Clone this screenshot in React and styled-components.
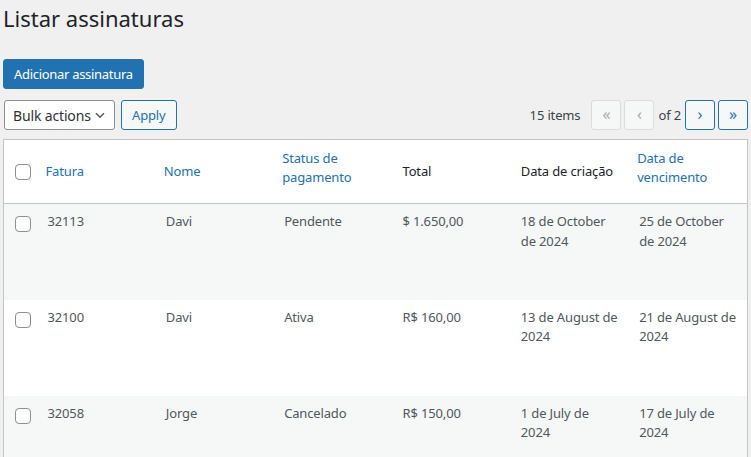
import React from "react";
import styled, { createGlobalStyle } from "styled-components";

const subscriptions = [
  {
    id: "32113",
    name: "Davi",
    status: "Pendente",
    total: "$ 1.650,00",
    created: "18 de October de 2024",
    due: "25 de October de 2024",
  },
  {
    id: "32100",
    name: "Davi",
    status: "Ativa",
    total: "R$ 160,00",
    created: "13 de August de 2024",
    due: "21 de August de 2024",
  },
  {
    id: "32058",
    name: "Jorge",
    status: "Cancelado",
    total: "R$ 150,00",
    created: "1 de July de 2024",
    due: "17 de July de 2024",
  },
];

// wraps: the label breaks onto two lines and sets the header height
const columns = [
  { key: "id", label: "Fatura", sortable: true },
  { key: "name", label: "Nome", sortable: true },
  { key: "status", label: "Status de pagamento", sortable: true, wraps: true },
  { key: "total", label: "Total" },
  { key: "created", label: "Data de criação" },
  { key: "due", label: "Data de vencimento", sortable: true, wraps: true },
];

const App = () => {
  return (
    <Page>
      <GlobalStyle />
      <Title>Listar assinaturas</Title>
      <PrimaryButton>Adicionar assinatura</PrimaryButton>

      <TableNav>
        <BulkGroup>
          <Select>
            Bulk actions
            <svg width="12" height="12" viewBox="0 0 12 12">
              <path
                d="M2 4.2l4 4 4-4"
                fill="none"
                stroke="#50575e"
                strokeWidth="1.4"
              />
            </svg>
          </Select>
          <SecondaryButton>Apply</SecondaryButton>
        </BulkGroup>
        <Pagination>
          <ItemCount>15 items</ItemCount>
          <PageButton disabled>«</PageButton>
          <PageButton disabled>‹</PageButton>
          <PageInfo>of 2</PageInfo>
          <PageButton>›</PageButton>
          <PageButton>»</PageButton>
        </Pagination>
      </TableNav>

      <Table>
        <colgroup>
          <col style={{ width: 34 }} />
          {columns.map((c) => (
            <col key={c.key} />
          ))}
        </colgroup>
        <thead>
          <tr>
            <HeadCheck>
              <Checkbox />
            </HeadCheck>
            {columns.map((c) =>
              c.sortable ? (
                <HeadCell key={c.key} $sortable>
                  <SortLink $wraps={c.wraps}>{c.label}</SortLink>
                </HeadCell>
              ) : (
                <HeadCell key={c.key}>{c.label}</HeadCell>
              )
            )}
          </tr>
        </thead>
        <tbody>
          {subscriptions.map((s, i) => (
            <Row key={s.id} $alt={i % 2 === 0}>
              <BodyCheck>
                <Checkbox />
              </BodyCheck>
              {columns.map((c) => (
                <Cell key={c.key}>{s[c.key]}</Cell>
              ))}
            </Row>
          ))}
        </tbody>
      </Table>
    </Page>
  );
};

export default App;

const GlobalStyle = createGlobalStyle`
  html, body {
    margin: 0;
    background: #f0f0f1;
  }
  body {
    font-family: "Noto Sans", "Open Sans", sans-serif;
    font-size: 13px;
    color: #3c434a;
    letter-spacing: -0.15px;
  }
`;

const Page = styled.div`
  padding: 0 3px 0 3px;
  display: flex;
  flex-direction: column;
  align-items: flex-start;
`;

const Title = styled.h1`
  margin: 0;
  padding-top: 3px;
  font-size: 22px;
  font-weight: 400;
  line-height: 30px;
  color: #1d2327;
  letter-spacing: 0;
`;

const PrimaryButton = styled.div`
  margin-top: 26px;
  height: 30px;
  box-sizing: border-box;
  padding: 0 10px;
  display: flex;
  align-items: center;
  background: #2271b1;
  border: 1px solid #2271b1;
  border-radius: 3px;
  color: #fff;
  font-size: 13px;
  letter-spacing: -0.3px;
`;

const TableNav = styled.div`
  margin-top: 11px;
  align-self: stretch;
  display: flex;
  justify-content: space-between;
  align-items: center;
  height: 30px;
`;

const BulkGroup = styled.div`
  display: flex;
  gap: 6px;
  padding-left: 1px;
`;

const Select = styled.div`
  box-sizing: border-box;
  width: 111px;
  height: 30px;
  padding: 0 8px 0 8px;
  display: flex;
  align-items: center;
  justify-content: space-between;
  background: #fff;
  border: 1px solid #8c8f94;
  border-radius: 3px;
  color: #2c3338;
  font-size: 14px;
`;

const SecondaryButton = styled.div`
  box-sizing: border-box;
  height: 30px;
  padding: 0 10px;
  display: flex;
  align-items: center;
  background: #f6f7f7;
  border: 1px solid #2271b1;
  border-radius: 3px;
  color: #2271b1;
`;

const Pagination = styled.div`
  display: flex;
  align-items: center;
  gap: 3px;
`;

const ItemCount = styled.span`
  margin-right: 8px;
  color: #3c434a;
`;

const PageInfo = styled.span`
  margin: 0 1px;
  color: #3c434a;
`;

const PageButton = styled.div`
  box-sizing: border-box;
  width: 30px;
  height: 30px;
  display: flex;
  align-items: center;
  justify-content: center;
  padding-bottom: 2px;
  font-size: 16px;
  border-radius: 3px;
  background: #f6f7f7;
  border: 1px solid ${(p) => (p.disabled ? "#dcdcde" : "#2271b1")};
  color: ${(p) => (p.disabled ? "#a7aaad" : "#2271b1")};
`;

const Table = styled.table`
  margin-top: 9px;
  width: 100%;
  table-layout: fixed;
  border-collapse: collapse;
  background: #fff;
  border: 1px solid #c3c4c7;
`;

const HeadCheck = styled.th`
  height: 63px;
  padding: 0 0 0 11px;
  vertical-align: middle;
  text-align: left;
  border-bottom: 1px solid #c3c4c7;
`;

const HeadCell = styled.th`
  padding: ${(p) => (p.$sortable ? "0" : "8px 10px")};
  vertical-align: middle;
  text-align: left;
  font-weight: 400;
  line-height: 19px;
  color: #1d2327;
  border-bottom: 1px solid #c3c4c7;
`;

const SortLink = styled.a`
  display: block;
  padding: ${(p) => (p.$wraps ? "8px 8px 16px" : "8px")};
  color: #2271b1;
  text-decoration: none;
`;

const Row = styled.tr`
  background: ${(p) => (p.$alt ? "#f6f7f7" : "#fff")};
`;

const BodyCheck = styled.td`
  height: 96px;
  box-sizing: border-box;
  padding: 12px 0 0 11px;
  vertical-align: top;
`;

const Cell = styled.td`
  padding: 8px 10px;
  vertical-align: top;
  line-height: 19.5px;
  color: #50575e;
`;

const Checkbox = styled.span`
  display: block;
  box-sizing: border-box;
  width: 16px;
  height: 16px;
  background: #fff;
  border: 1px solid #8c8f94;
  border-radius: 4px;
`;
